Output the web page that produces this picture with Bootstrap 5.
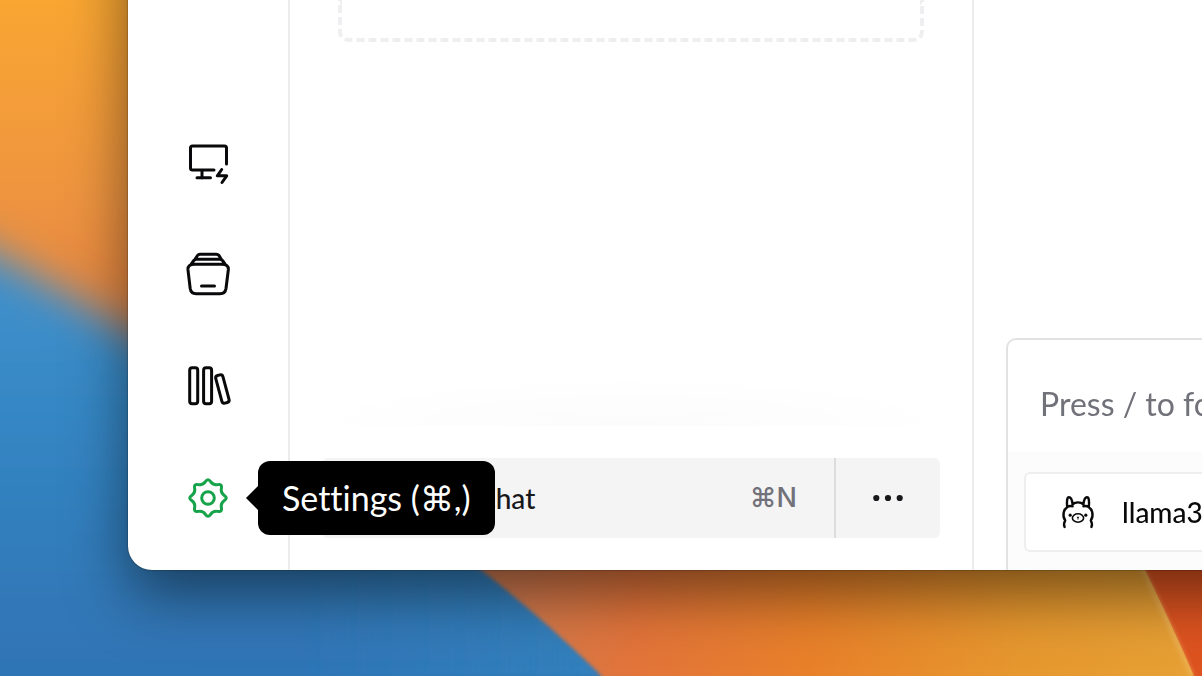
<!DOCTYPE html>
<html lang="en">
<head>
<meta charset="utf-8">
<meta name="viewport" content="width=device-width, initial-scale=1">
<title>Chat</title>
<link href="https://cdn.jsdelivr.net/npm/bootstrap@5.3.0/dist/css/bootstrap.min.css" rel="stylesheet">
<style>
  body { font-family: Lato, "Liberation Sans", sans-serif; font-variant-ligatures: none; color: #18181b; background: #2f78b8; }
  .desktop { padding: 0 0 106px 128px; overflow: clip; }
  .app-window { isolation: isolate; }
  .app-window::before { content: ""; position: absolute; z-index: -1; inset: -120px -160px 0 0; background: #fff; border-bottom-left-radius: 24px; box-shadow: 0 0 2px rgba(0,0,0,.6), 0 24px 60px rgba(0,0,0,.5); }
  .app-clip { border-bottom-left-radius: 24px; overflow: clip; }
  .rail { width: 162px; border-right: 2px solid #ececee; }
  .rail-btn { height: 112px; border: 0; border-radius: 0; color: #09090b; }
  .rail-btn.active { color: #16a34a !important; border-color: transparent; }
  .line-icon { fill: none; stroke: currentColor; stroke-width: 3; stroke-linecap: round; stroke-linejoin: round; overflow: visible; }
  .hint { left: 130px; background: #000; color: #fff; border-radius: 12px; font-size: 34px; line-height: 48px; padding: 13px 24px; white-space: nowrap; z-index: 5; }
  .hint::before { content: ""; position: absolute; right: 100%; top: 50%; margin-top: -12px; border: 12px solid transparent; border-left: 0; border-right-color: #000; }
  .chats { width: 684px; border-right: 2px solid #ececee; }
  .drop-zone { height: 42px; margin: 0 48px; border: 4px dashed #efeff1; border-top: 0; border-radius: 0 0 10px 10px; }
  .fade-edge { height: 50px; background: radial-gradient(ellipse at 50% 100%, rgba(0,0,0,.016), transparent 72%); }
  .chats-foot { padding: 32px; }
  .foot-btn { height: 80px; background: #f4f4f4; border: 0; border-radius: 6px; font-size: 28px; font-weight: 500; color: #18181b; }
  .new-chat { padding: 0 37px 0 96px; }
  .more { width: 106px; border-left: 2px solid #dcdcde; }
  .keys { color: #71717a; font-family: Inter, sans-serif; font-size: 27px; }
  .talk { padding-left: 32px; min-width: 0; }
  .composer { height: 234px; margin-bottom: -2px; border: 2px solid #e2e2e4; border-right: 0; border-bottom: 0; border-top-left-radius: 10px; }
  .prompt { height: 112px; padding: 46px 0 30px 32px; border: 0; resize: none; font-size: 32px; line-height: 36px; background: transparent; white-space: nowrap; overflow: hidden; }
  .prompt::placeholder { color: #71717a; opacity: 1; }
  .tools { background: #fcfcfc; padding: 20px 0 20px 16px; }
  .model { height: 80px; background: #fff; border: 2px solid #eeeef0; border-right: 0; border-radius: 6px 0 0 6px; font-size: 28px; font-weight: 500; padding: 0 0 0 36px; gap: 28px; color: #09090b; }
</style>
</head>
<body class="vh-100 overflow-hidden">
<svg class="position-fixed top-0 start-0 w-100 h-100" viewBox="0 0 1202 676" preserveAspectRatio="none" aria-hidden="true">
  <defs>
    <linearGradient id="amber" x1="0" y1="0" x2="0" y2="1">
      <stop offset="0" stop-color="#f9a632"/><stop offset=".5" stop-color="#ee9440"/><stop offset="1" stop-color="#df7a42"/>
    </linearGradient>
    <linearGradient id="sunset" gradientUnits="userSpaceOnUse" x1="500" y1="600" x2="1190" y2="650">
      <stop offset="0" stop-color="#cf7a50"/><stop offset=".2" stop-color="#e2743a"/><stop offset=".45" stop-color="#e8802a"/><stop offset=".75" stop-color="#e6972e"/><stop offset="1" stop-color="#e6a034"/>
    </linearGradient>
    <linearGradient id="sea" gradientUnits="userSpaceOnUse" x1="0" y1="260" x2="0" y2="676">
      <stop offset="0" stop-color="#4292cc"/><stop offset=".4" stop-color="#3486c4"/><stop offset=".8" stop-color="#3379b8"/><stop offset="1" stop-color="#2f74b6"/>
    </linearGradient>
    <linearGradient id="seaRight" gradientUnits="userSpaceOnUse" x1="300" y1="0" x2="600" y2="0">
      <stop offset="0" stop-color="#3280bc" stop-opacity="0"/><stop offset="1" stop-color="#3280bc"/>
    </linearGradient>
    <filter id="wide" x="-50%" y="-50%" width="200%" height="200%"><feGaussianBlur stdDeviation="20"/></filter>
    <filter id="slim"><feGaussianBlur stdDeviation="2"/></filter>
  </defs>
  <rect width="1202" height="400" fill="url(#amber)"/>
  <rect x="200" y="500" width="1002" height="176" fill="url(#sunset)"/>
  <path d="M-100 208L0 256L140 336L260 414V800H-100Z" fill="url(#sea)" filter="url(#wide)"/>
  <path d="M-50 420H200L300 450Q400 510 480 570Q541 618 600 676L620 700H-50Z" fill="url(#sea)" filter="url(#slim)"/>
  <path d="M300 450Q400 510 480 570Q541 618 600 676H300Z" fill="url(#seaRight)" filter="url(#slim)"/>
  <path d="M1120 520Q1164 606 1194 676H1202V520Z" fill="#dd5320"/>
  <path d="M1118 520Q1162 606 1192 676" fill="none" stroke="#f4bf70" stroke-width="4" opacity=".55" filter="url(#slim)"/>
</svg>

<main class="desktop position-relative h-100">
  <div class="app-window position-relative h-100">
    <div class="app-clip d-flex h-100">
      <nav class="rail d-flex flex-column justify-content-end flex-shrink-0 pb-3" aria-label="Main">
        <button class="btn rail-btn p-0" type="button" aria-label="Local server">
          <svg class="line-icon" width="44" height="44" viewBox="0 -1 44 44"><path d="M40.5 23V7q0-2-2-2h-32q-2 0-2 2v20q0 2 2 2H28M16 29v8M11 36.8h13.5M35.7 28.5L31.3 34.8H40.7L36 41.5"/></svg>
        </button>
        <button class="btn rail-btn p-0" type="button" aria-label="Models">
          <svg class="line-icon" width="44" height="44" viewBox="0 0 44 44"><path d="M8.5 12.3H35.8Q42.8 12.3 42.3 18L40 36.5Q39.2 41.7 34 41.7H10.2Q5 41.7 4.2 36.5L2 18Q1.5 12.3 8.5 12.3ZM5 12.3L7.8 8.5Q8.8 7.3 10.5 7.3H33.8Q35.5 7.3 36.5 8.5L39.3 12.3M9 7.3L11.5 3.5Q12.3 2.3 14 2.3H30.2Q32 2.3 33 3.5L35.3 7.3M15.5 34H28.5"/></svg>
        </button>
        <button class="btn rail-btn p-0" type="button" aria-label="Library">
          <svg class="line-icon" width="44" height="44" viewBox="0 0 44 44"><rect x="3.7" y="3.7" width="8" height="36" rx="2.5"/><rect x="17.6" y="3.7" width="8" height="36" rx="2.5"/><rect x="32.7" y="10.7" width="7.4" height="28.6" rx="2.5" transform="rotate(-15 36.4 25)"/></svg>
        </button>
        <div class="position-relative d-flex align-items-center">
          <button class="btn rail-btn active w-100 p-0" type="button" aria-label="Settings" aria-describedby="settings-hint">
            <svg class="line-icon" width="44" height="44" viewBox="-22 -22 44 44"><path d="M2.6-16.3Q5.2-12.5 9.7-13.4Q14.3-14.3 13.4-9.7Q12.5-5.2 16.3-2.6Q20.2 0 16.3 2.6Q12.5 5.2 13.4 9.7Q14.3 14.3 9.7 13.4Q5.2 12.5 2.6 16.3Q0 20.2-2.6 16.3Q-5.2 12.5-9.7 13.4Q-14.3 14.3-13.4 9.7Q-12.5 5.2-16.3 2.6Q-20.2 0-16.3-2.6Q-12.5-5.2-13.4-9.7Q-14.3-14.3-9.7-13.4Q-5.2-12.5-2.6-16.3Q0-20.2 2.6-16.3Z"/><circle r="6.3"/></svg>
          </button>
          <div class="hint position-absolute" id="settings-hint" role="tooltip">Settings (⌘,)</div>
        </div>
      </nav>

      <section class="chats d-flex flex-column flex-shrink-0" aria-label="Chats">
        <div class="drop-zone"></div>
        <div class="fade-edge mt-auto"></div>
        <div class="chats-foot d-flex">
          <button class="btn foot-btn new-chat rounded-end-0 flex-grow-1 d-flex align-items-center justify-content-between" type="button">
            <span>New chat</span><span class="keys">⌘N</span>
          </button>
          <button class="btn foot-btn more rounded-start-0 p-0" type="button" aria-label="More">
            <svg width="32" height="8" viewBox="0 0 32 8" fill="currentColor" class="d-block mx-auto"><circle cx="4.3" cy="4" r="3.1"/><circle cx="16" cy="4" r="3.1"/><circle cx="27.7" cy="4" r="3.1"/></svg>
          </button>
        </div>
      </section>

      <section class="talk flex-grow-1 d-flex flex-column justify-content-end" aria-label="Conversation">
        <form class="composer d-flex flex-column">
          <textarea class="prompt form-control shadow-none" rows="1" aria-label="Message" placeholder="Press / to focus"></textarea>
          <div class="tools flex-grow-1">
            <button class="model btn w-100 d-flex align-items-center" type="button">
              <svg class="line-icon flex-shrink-0" width="32" height="32" viewBox="0 0 32 32"><g stroke-width="2.4"><path d="M2.6 31Q1.2 28 3.2 24.5Q.6 20.5 1.8 16Q2.6 12.8 5.2 11.2Q4.2 1.3 7 1.3Q9.8 1.3 10.6 8.4Q12.7 6.4 16 6.4T21.4 8.4Q22.2 1.3 25 1.3T26.8 11.2Q29.4 12.8 30.2 16Q31.4 20.5 28.8 24.5Q30.8 28 29.4 31M5.2 11.2Q7.2 9.5 10.6 10.2M26.8 11.2Q24.8 9.5 21.4 10.2"/><ellipse cx="16" cy="22" rx="5.6" ry="4.2" stroke-width="1.6"/></g><g fill="currentColor" stroke="none"><circle cx="8.2" cy="19.2" r="1.6"/><circle cx="23.8" cy="19.2" r="1.6"/><path d="M14.6 20.8h2.8L16.5 22v1.6h-1V22Z"/></g></svg>
              <span>llama3</span>
            </button>
          </div>
        </form>
      </section>
    </div>
  </div>
</main>
<script src="https://cdn.jsdelivr.net/npm/bootstrap@5.3.0/dist/js/bootstrap.bundle.min.js"></script>
</body>
</html>
